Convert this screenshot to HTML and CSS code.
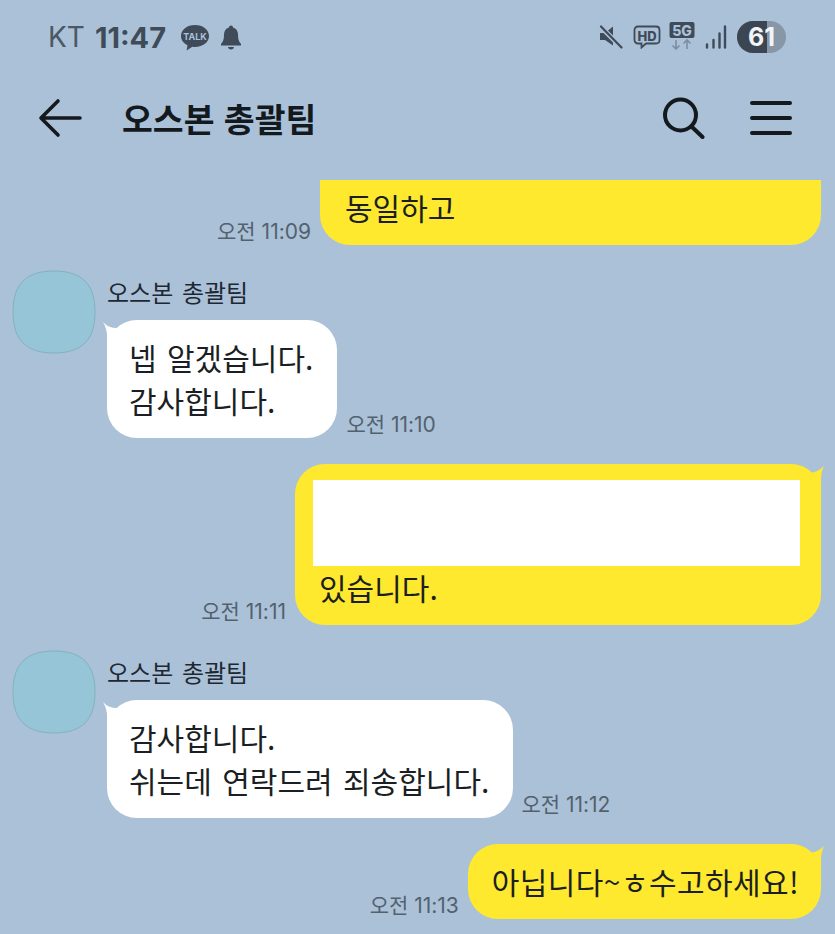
FILE: index.html
```html
<!DOCTYPE html>
<html lang="ko">
<head>
    <meta charset="UTF-8">
    <meta name="viewport" content="width=device-width, initial-scale=1.0">
    <title>오스본 총괄팀</title>
    <link rel="stylesheet" href="styles.css">
</head>
<body>
    <div class="status">
        <span class="carrier">KT</span>
        <span class="clock">11:47</span>
        <svg class="talk" width="30" height="28" viewBox="0 0 30 28">
            <path d="M15 2C7 2 1 6.800 1 13c0 4 2.600 7.400 6.500 9.300L6.600 27.500 12.300 23.700c.9.100 1.800.2 2.700.2 8 0 14-4.800 14-10.900S23 2 15 2z" fill="#3f4b58"/>
            <text x="15" y="16.500" text-anchor="middle" class="talk-text">TALK</text>
        </svg>
        <svg class="bell" width="22" height="26" viewBox="0 0 22 26">
            <path d="M11 1.500c-1.200 0-2 .8-2 1.900C5.800 4.300 4 7 4 10.500c0 4.500-.6 7-3 9.500v1.500h20V20c-2.400-2.500-3-5-3-9.500 0-3.500-1.800-6.200-5-7.100 0-1.100-.8-1.900-2-1.900z" fill="#3f4b58"/>
            <path d="M8 23h6c0 1.400-1.300 2.500-3 2.500S8 24.400 8 23z" fill="#3f4b58"/>
        </svg>
        <div class="status-right">
            <svg class="mute" width="24" height="24" viewBox="0 0 24 24">
                <path d="M1 8h5l8-6.500v19L6 15H1z" fill="#3f4b58"/>
                <path d="M2 2l20 20" stroke="#abc1d8" stroke-width="5"/>
                <path d="M2 1.500l20.500 21" stroke="#3f4b58" stroke-width="2.200" stroke-linecap="round"/>
            </svg>
            <svg class="hd" width="28" height="24" viewBox="0 0 28 24">
                <path d="M5 1.500h18c2 0 3.500 1.500 3.500 3.500v10c0 2-1.500 3.500-3.500 3.500H13l-4.500 4v-4H5c-2 0-3.500-1.500-3.500-3.500V5c0-2 1.500-3.500 3.500-3.500z" fill="none" stroke="#3f4b58" stroke-width="1.800"/>
                <text x="14" y="15.500" text-anchor="middle" class="hd-text">HD</text>
            </svg>
            <svg class="net" width="26" height="28" viewBox="0 0 26 28">
                <rect x="0.500" y="0" width="25" height="16" rx="2" fill="#3f4b58"/>
                <text x="13" y="13.500" text-anchor="middle" class="net-text">5G</text>
                <path d="M7 18v9M3.500 23.500L7 27l3.500-3.500" fill="none" stroke="#7d8d9e" stroke-width="1.600"/>
                <path d="M18 27v-9M14.500 21.500L18 18l3.500 3.500" fill="none" stroke="#7d8d9e" stroke-width="1.600"/>
            </svg>
            <svg class="signal" width="22" height="24" viewBox="0 0 22 24">
                <path d="M2 19.500v3M8.500 15v7.500M14.500 8.500v14M20 1.500v21" stroke="#3f4b58" stroke-width="2.400" stroke-linecap="round"/>
            </svg>
            <div class="battery">
                <div class="battery-level"></div>
                <span class="battery-text">61</span>
            </div>
        </div>
    </div>

    <div class="header">
        <svg class="back" width="44" height="40" viewBox="0 0 44 40">
            <path d="M42 20H4M20 3L3 20l17 17" fill="none" stroke="#14191e" stroke-width="3.600" stroke-linecap="round" stroke-linejoin="round"/>
        </svg>
        <h1 class="title">오스본 총괄팀</h1>
        <svg class="search" width="44" height="44" viewBox="0 0 44 44">
            <circle cx="19.500" cy="19" r="15.500" fill="none" stroke="#14191e" stroke-width="4"/>
            <path d="M30.500 30.500l11 10.500" stroke="#14191e" stroke-width="4" stroke-linecap="round"/>
        </svg>
        <svg class="menu" width="42" height="36" viewBox="0 0 42 36">
            <path d="M2 3h38M2 18h38M2 33h38" stroke="#14191e" stroke-width="4" stroke-linecap="round"/>
        </svg>
    </div>

    <div class="chat">
        <div class="row row-me row-first">
            <span class="time">오전 11:09</span>
            <div class="bubble bubble-me bubble-cut">동일하고</div>
        </div>

        <div class="row row-other">
            <svg class="avatar" width="84" height="84" viewBox="0 0 84 84">
                <path d="M42 1C70 1 83 14 83 42S70 83 42 83 1 70 1 42 14 1 42 1z" fill="#96c5d7" stroke="#82b3bd" stroke-width="1"/>
            </svg>
            <div class="other-body">
                <div class="name">오스본 총괄팀</div>
                <div class="bubble-line">
                    <div class="bubble bubble-other tail-left">넵 알겠습니다.<br>감사합니다.</div>
                    <span class="time">오전 11:10</span>
                </div>
            </div>
        </div>

        <div class="row row-me">
            <span class="time">오전 11:11</span>
            <div class="bubble bubble-me tail-right bubble-wide">
                <div class="hidden-block"></div>
                있습니다.
            </div>
        </div>

        <div class="row row-other">
            <svg class="avatar" width="84" height="84" viewBox="0 0 84 84">
                <path d="M42 1C70 1 83 14 83 42S70 83 42 83 1 70 1 42 14 1 42 1z" fill="#96c5d7" stroke="#82b3bd" stroke-width="1"/>
            </svg>
            <div class="other-body">
                <div class="name">오스본 총괄팀</div>
                <div class="bubble-line">
                    <div class="bubble bubble-other tail-left">감사합니다.<br>쉬는데 연락드려 죄송합니다.</div>
                    <span class="time time-near">오전 11:12</span>
                </div>
            </div>
        </div>

        <div class="row row-me">
            <span class="time">오전 11:13</span>
            <div class="bubble bubble-me tail-right bubble-loose">아닙니다~ㅎ수고하세요!</div>
        </div>
    </div>
</body>
</html>
```

FILE: styles.css
```css
body {
    margin: 0;
    width: 835px;
    height: 934px;
    overflow: hidden;
    background: #abc1d8;
    font-family: "Noto Sans CJK KR", "Noto Sans", sans-serif;
    color: #1b1f23;
}

/* status bar */
.status {
    height: 74px;
    display: flex;
    align-items: center;
    padding: 0 49px 0 48px;
    box-sizing: border-box;
    color: #4a5764;
    font-family: "Inter", "Noto Sans", sans-serif;
}
.carrier {
    font-size: 28px;
    margin-right: 10px;
}
.clock {
    font-size: 29px;
    font-weight: 700;
    color: #3f4b58;
    margin-right: 14px;
}
.talk {
    margin-right: 10px;
}
.talk-text {
    font-family: "Inter", sans-serif;
    font-size: 9px;
    font-weight: 700;
    fill: #abc1d8;
}
.status-right {
    margin-left: auto;
    display: flex;
    align-items: center;
    gap: 10px;
}
.hd-text {
    font-family: "Inter", sans-serif;
    font-size: 13px;
    font-weight: 800;
    fill: #3f4b58;
}
.net-text {
    font-family: "Inter", sans-serif;
    font-size: 14px;
    font-weight: 800;
    fill: #abc1d8;
}
.net {
    margin-top: -2px;
    margin-left: -2px;
}
.battery {
    position: relative;
    width: 49px;
    height: 32px;
    border-radius: 16px;
    overflow: hidden;
    background: #8797a8;
    text-align: center;
}
.battery-level {
    width: 30px;
    height: 32px;
    background: #3b4652;
}
.battery-text {
    position: absolute;
    left: 0;
    right: 0;
    top: 0;
    line-height: 32px;
    font-size: 25px;
    font-weight: 700;
    color: #f2f4f6;
}

/* title bar */
.header {
    height: 87px;
    display: flex;
    align-items: center;
    padding: 0 43px 0 38px;
    box-sizing: border-box;
}
.back {
    margin-right: 40px;
}
.title {
    margin: 0;
    font-size: 33.500px;
    font-weight: 700;
    color: #14191e;
}
.search {
    margin-left: auto;
    margin-right: 45px;
}

/* messages */
.chat {
    padding-top: 19px;
}
.row {
    display: flex;
    margin-top: 25px;
}
.row-first {
    margin-top: 0;
}
.row-me {
    justify-content: flex-end;
    align-items: flex-end;
    gap: 9px;
    padding-right: 14px;
}
.row-other {
    padding-left: 12px;
    gap: 11px;
    align-items: flex-start;
}
.row-me + .row-me {
    margin-top: 26px;
}
.row-other + .row-me {
    margin-top: 26px;
}
.name {
    height: 44px;
    line-height: 44px;
    margin-bottom: 6px;
    font-size: 24px;
    word-spacing: 2px;
    color: #1e2832;
}
.bubble-line {
    display: flex;
    align-items: flex-end;
    gap: 9px;
}
.bubble {
    position: relative;
    padding: 16px 24px;
    border-radius: 30px;
    font-size: 30px;
    line-height: 43px;
    word-spacing: 2px;
    white-space: nowrap;
}
.bubble-me {
    background: #ffe92e;
}
.bubble-other {
    background: #ffffff;
    padding-left: 22px;
}
.bubble-cut {
    width: 501px;
    box-sizing: border-box;
    padding: 6px 25px 16px;
    border-radius: 0 0 30px 30px;
}
.bubble-wide {
    width: 526px;
    box-sizing: border-box;
}
.bubble-loose {
    padding-right: 22px;
    letter-spacing: 0.400px;
}
.hidden-block {
    height: 86px;
    margin: 0 -3px 0 -6px;
    background: #ffffff;
}
.time {
    margin-bottom: 1px;
    line-height: 24px;
    font-family: "Inter", "Noto Sans CJK KR", sans-serif;
    font-size: 21px;
    color: #53616f;
    white-space: nowrap;
}
.time-near {
    margin-left: -1px;
}
.tail-left::before {
    content: "";
    position: absolute;
    left: -4px;
    top: 2px;
    width: 16px;
    height: 30px;
    background: #ffffff;
    clip-path: path("M0 0Q5 6 14 6L14 30L4 30L4 14Q4 7 0 0Z");
}
.tail-right::after {
    content: "";
    position: absolute;
    right: -3px;
    top: 2px;
    width: 16px;
    height: 30px;
    background: #ffe92e;
    clip-path: path("M16 0Q10 6 2 7L2 30L13 30L13 14Q13 6 16 0Z");
}
```
